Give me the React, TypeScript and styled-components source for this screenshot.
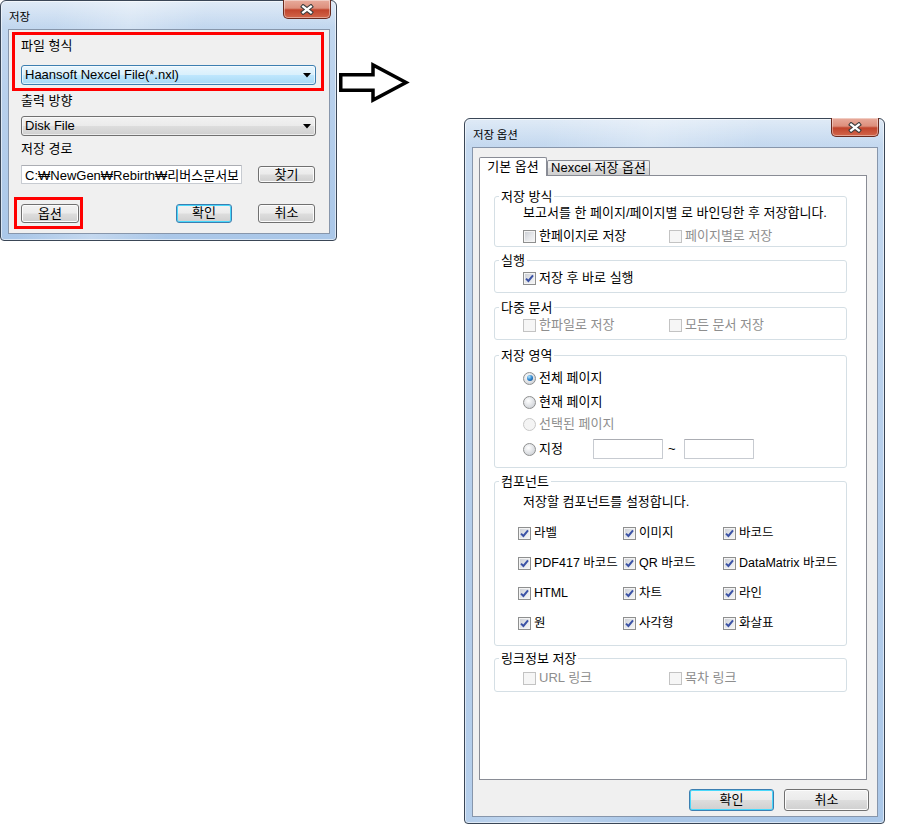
import React from 'react';
import styled, { createGlobalStyle } from 'styled-components';

const GlobalStyle = createGlobalStyle`
  html, body {
    margin: 0;
    padding: 0;
    background: #ffffff;
  }
  body {
    font-family: "Liberation Sans", "Noto Sans CJK KR", sans-serif;
    font-size: 13px;
    line-height: 16px;
    color: #000000;
  }
  * {
    box-sizing: border-box;
  }
`;

const hotGradient = 'linear-gradient(180deg, #eaf6fd 0%, #d9f0fc 48%, #bee6fd 52%, #a7d9f5 100%)';
const grayGradient = 'linear-gradient(180deg, #f2f2f2 0%, #ebebeb 48%, #dddddd 52%, #cfcfcf 100%)';

const Desktop = styled.div`
  display: flex;
  align-items: flex-start;
  width: 898px;
  height: 840px;
  overflow: hidden;
`;

const Window = styled.div<{ $width: number; $height: number; $top?: number; $left?: number }>`
  flex: none;
  display: flex;
  flex-direction: column;
  width: ${p => p.$width}px;
  height: ${p => p.$height}px;
  margin: ${p => p.$top ?? 0}px 0 0 ${p => p.$left ?? 0}px;
  padding: 0 6px 6px 7px;
  border: 1px solid #3a4656;
  border-radius: 6px 6px 4px 4px;
  background:
    linear-gradient(180deg, rgba(255, 255, 255, 0.45) 0px, rgba(255, 255, 255, 0) 26px),
    linear-gradient(100deg, rgba(255, 255, 255, 0) 15%, rgba(255, 255, 255, 0.3) 35%, rgba(255, 255, 255, 0) 55%),
    linear-gradient(180deg, #c6daf0 0%, #b8d0ec 40%, #aac7e8 100%);
  box-shadow: inset 0 0 0 1px rgba(255, 255, 255, 0.55);
`;

const TitleBar = styled.div`
  flex: none;
  height: 28px;
  display: flex;
  justify-content: space-between;
  align-items: flex-start;
`;

const Caption = styled.span`
  padding: 8px 0 0 1px;
  font-family: "Noto Sans CJK KR", sans-serif;
  font-size: 11.5px;
  line-height: 14px;
`;

const CloseButton = styled.div`
  width: 48px;
  height: 19px;
  margin: -1px -1px 0 0;
  display: flex;
  align-items: center;
  justify-content: center;
  border: 1px solid #6a2a1e;
  border-top: none;
  border-radius: 0 0 5px 5px;
  background: linear-gradient(180deg, #e8ab9c 0%, #dd8f7c 45%, #c1442c 55%, #d2664a 100%);
  box-shadow: inset 0 0 0 1px rgba(255, 255, 255, 0.4);
`;

const Client = styled.div`
  flex: 1;
  display: flex;
  flex-direction: column;
  border: 1px solid #8796ab;
  background: #f0f0f0;
`;

/* ---------- 저장 dialog ---------- */

const SaveBody = styled.div`
  display: flex;
  flex-direction: column;
  padding: 0 13px 0 12px;
`;

const Highlight = styled.div<{ $margin: string; $padding: string }>`
  border: 3px solid #ff0000;
  margin: ${p => p.$margin};
  padding: ${p => p.$padding};
`;

const FieldLabel = styled.div<{ $mt: number }>`
  margin-top: ${p => p.$mt}px;
  line-height: 16px;
`;

const Combo = styled.div<{ $hot?: boolean; $mt?: number }>`
  height: 20px;
  margin-top: ${p => p.$mt ?? 0}px;
  display: flex;
  align-items: center;
  justify-content: space-between;
  padding: 0 4px 0 3px;
  border: 1px solid ${p => (p.$hot ? '#3c7fb1' : '#707070')};
  border-radius: 3px;
  background: ${p => (p.$hot ? hotGradient : grayGradient)};
  box-shadow: inset 0 0 0 1px rgba(255, 255, 255, 0.6);
`;

const PathRow = styled.div`
  margin-top: 8px;
  display: flex;
  align-items: center;
  gap: 16px;
`;

const TextBox = styled.input<{ $w: number; $h: number }>`
  width: ${p => p.$w}px;
  height: ${p => p.$h}px;
  margin: 0;
  padding: 0 3px;
  font: inherit;
  color: #000;
  background: #ffffff;
  border: 1px solid #c7cbd1;
  border-top-color: #abadb3;
  border-radius: 1px;
  outline: none;
`;

const ButtonRow = styled.div<{ $mt: number; $justify?: string; $pr?: number }>`
  margin-top: ${p => p.$mt}px;
  padding-right: ${p => p.$pr ?? 0}px;
  display: flex;
  align-items: center;
  justify-content: ${p => p.$justify ?? 'flex-start'};
`;

const PushButton = styled.button<{ $w: number; $h: number; $default?: boolean; $ml?: number }>`
  width: ${p => p.$w}px;
  height: ${p => p.$h}px;
  margin: 0 0 0 ${p => p.$ml ?? 0}px;
  padding: 0;
  font: inherit;
  color: #000;
  border: 1px solid ${p => (p.$default ? '#3c7fb1' : '#707070')};
  border-radius: 3px;
  background: ${grayGradient};
  box-shadow: inset 0 0 0 1px ${p => (p.$default ? '#48d8fb' : '#fcfcfc')};
`;

const Arrow = styled.svg`
  flex: none;
  margin-top: 60px;
`;

/* ---------- 저장 옵션 dialog ---------- */

const OptionsBody = styled.div`
  display: flex;
  flex-direction: column;
  padding-top: 9px;
  flex: 1;
`;

const TabStrip = styled.div`
  height: 18px;
  margin-left: 6px;
  display: flex;
  align-items: flex-end;
`;

const Tab = styled.div<{ $active?: boolean; $w: number }>`
  position: relative;
  z-index: ${p => (p.$active ? 2 : 1)};
  width: ${p => p.$w}px;
  height: ${p => (p.$active ? 19 : 15)}px;
  margin-bottom: ${p => (p.$active ? -1 : 0)}px;
  padding-top: ${p => (p.$active ? 1 : 0)}px;
  line-height: ${p => (p.$active ? 16 : 14)}px;
  text-align: center;
  white-space: nowrap;
  border: 1px solid #898c95;
  border-bottom: none;
  border-radius: 2px 2px 0 0;
  background: ${p => (p.$active ? '#ffffff' : 'linear-gradient(180deg, #f2f2f2 0%, #ebebeb 48%, #dddddd 52%, #cfcfcf 100%)')};
`;

const TabPane = styled.div`
  width: 388px;
  height: 605px;
  margin-left: 6px;
  padding: 13px 19px 0 14px;
  border: 1px solid #898c95;
  background: #ffffff;
`;

const Group = styled.fieldset<{ $mt?: number; $pb: number }>`
  margin: ${p => p.$mt ?? 0}px 0 0 0;
  padding: 0 0 ${p => p.$pb}px 0;
  min-width: 0;
  border: 1px solid #d5dfe5;
  border-radius: 3px;
`;

const Legend = styled.legend`
  margin-left: 4px;
  padding: 0 2px;
  line-height: 15px;
`;

const Row = styled.div<{ $mt: number; $pl?: number; $h?: number }>`
  height: ${p => p.$h ?? 16}px;
  margin-top: ${p => p.$mt}px;
  padding-left: ${p => p.$pl ?? 28}px;
  display: flex;
  align-items: center;
  white-space: nowrap;
`;

const CheckGrid = styled.div`
  margin-top: 15px;
  padding-left: 23px;
  display: grid;
  grid-template-columns: 105px 100px auto;
  grid-auto-rows: 16px;
  row-gap: 14px;
  font-size: 12.5px;
`;

const Option = styled.label<{ $w?: number; $disabled?: boolean; $gap?: number }>`
  flex: none;
  display: inline-flex;
  align-items: center;
  gap: ${p => p.$gap ?? 3}px;
  width: ${p => (p.$w ? `${p.$w}px` : 'auto')};
  height: 16px;
  white-space: nowrap;
  color: ${p => (p.$disabled ? '#8e8e8e' : '#000000')};
`;

const Box = styled.span<{ $disabled?: boolean }>`
  flex: none;
  width: 13px;
  height: 13px;
  display: flex;
  align-items: center;
  justify-content: center;
  border: 1px solid ${p => (p.$disabled ? '#c3c3c3' : '#8e8f8f')};
  background: ${p =>
    p.$disabled ? '#f6f6f6' : 'linear-gradient(135deg, #c9ccd2 0%, #e6e8eb 55%, #f6f6f6 100%)'};
  box-shadow: inset 0 0 0 1px ${p => (p.$disabled ? '#f6f6f6' : '#f4f4f4')};
`;

const Radio = styled.span<{ $checked?: boolean; $disabled?: boolean }>`
  flex: none;
  width: 13px;
  height: 13px;
  display: flex;
  align-items: center;
  justify-content: center;
  border-radius: 50%;
  border: 1px solid ${p => (p.$disabled ? '#c8c8c8' : '#8e8f8f')};
  background: ${p =>
    p.$disabled ? '#f4f4f4' : 'radial-gradient(circle at 40% 35%, #ffffff 0%, #e4e6e9 45%, #c3c7cd 100%)'};

  &::after {
    content: '';
    display: ${p => (p.$checked ? 'block' : 'none')};
    width: 6px;
    height: 6px;
    border-radius: 50%;
    background: radial-gradient(circle at 35% 30%, #b5e6fc 0%, #2f86cf 50%, #0d3d7a 100%);
  }
`;

const Tilde = styled.span`
  width: 21px;
  padding-left: 5px;
`;

const CheckMark = () => (
  <svg width="9" height="9" viewBox="0 0 9 9">
    <path d="M1 4.6 L3.4 7 L8 1.4" fill="none" stroke="#3b52a5" strokeWidth="2" />
  </svg>
);

const CloseGlyph = () => (
  <svg width="14" height="11" viewBox="0 0 14 11">
    <path d="M3.2 2.6 L10.8 8.4 M10.8 2.6 L3.2 8.4" stroke="#3e3e3e" strokeWidth="4.4" strokeLinecap="square" />
    <path d="M3.2 2.6 L10.8 8.4 M10.8 2.6 L3.2 8.4" stroke="#ffffff" strokeWidth="2.3" strokeLinecap="square" />
  </svg>
);

const ComboArrow = () => (
  <svg width="8" height="5" viewBox="0 0 8 5">
    <polygon points="0,0 8,0 4,4.5" fill="#000" />
  </svg>
);

type CheckProps = { label: string; checked?: boolean; disabled?: boolean; width?: number };

const Check = ({ label, checked, disabled, width }: CheckProps) => (
  <Option $w={width} $disabled={disabled}>
    <Box $disabled={disabled}>{checked && <CheckMark />}</Box>
    {label}
  </Option>
);

type RadioProps = { label: string; checked?: boolean; disabled?: boolean; width?: number };

const RadioOption = ({ label, checked, disabled, width }: RadioProps) => (
  <Option $w={width} $disabled={disabled} $gap={3}>
    <Radio $checked={checked} $disabled={disabled} />
    {label}
  </Option>
);

const components = [
  '라벨', '이미지', '바코드',
  'PDF417 바코드', 'QR 바코드', 'DataMatrix 바코드',
  'HTML', '차트', '라인',
  '원', '사각형', '화살표',
];

export default function App() {
  return (
    <Desktop>
      <GlobalStyle />

      <Window $width={337} $height={241}>
        <TitleBar>
          <Caption>저장</Caption>
          <CloseButton><CloseGlyph /></CloseButton>
        </TitleBar>
        <Client>
          <SaveBody>
            <Highlight $margin="2px -8px 0 -9px" $padding="0 5px 3px 6px">
              <FieldLabel $mt={3}>파일 형식</FieldLabel>
              <Combo $hot $mt={11}>
                <span>Haansoft Nexcel File(*.nxl)</span>
                <ComboArrow />
              </Combo>
            </Highlight>
            <FieldLabel $mt={2}>출력 방향</FieldLabel>
            <Combo $mt={7}>
              <span>Disk File</span>
              <ComboArrow />
            </Combo>
            <FieldLabel $mt={5}>저장 경로</FieldLabel>
            <PathRow>
              <TextBox $w={221} $h={19} readOnly value="C:₩NewGen₩Rebirth₩리버스문서보관함" />
              <PushButton $w={57} $h={17}>찾기</PushButton>
            </PathRow>
            <ButtonRow $mt={13}>
              <Highlight $margin="0 0 0 -7px" $padding="4px 1px 3px 4px">
                <PushButton $w={58} $h={19}>옵션</PushButton>
              </Highlight>
              <PushButton $w={56} $h={19} $default $ml={93}>확인</PushButton>
              <PushButton $w={57} $h={19} $ml={26}>취소</PushButton>
            </ButtonRow>
          </SaveBody>
        </Client>
      </Window>

      <Arrow width="75" height="45" viewBox="0 0 75 45">
        <polygon
          points="3.75,14.75 36,14.75 36,5 69,22.5 36,40 36,30.25 3.75,30.25"
          fill="#ffffff"
          stroke="#000000"
          strokeWidth="3.5"
          strokeLinejoin="miter"
        />
      </Arrow>

      <Window $width={421} $height={706} $top={118} $left={52}>
        <TitleBar>
          <Caption>저장 옵션</Caption>
          <CloseButton><CloseGlyph /></CloseButton>
        </TitleBar>
        <Client>
          <OptionsBody>
            <TabStrip>
              <Tab $active $w={68}>기본 옵션</Tab>
              <Tab $w={103}>Nexcel 저장 옵션</Tab>
            </TabStrip>
            <TabPane>
              <Group $pb={2}>
                <Legend>저장 방식</Legend>
                <Row $mt={1}>보고서를 한 페이지/페이지별 로 바인딩한 후 저장합니다.</Row>
                <Row $mt={7}>
                  <Check label="한페이지로 저장" width={146} />
                  <Check label="페이지별로 저장" disabled />
                </Row>
              </Group>

              <Group $mt={6} $pb={6}>
                <Legend>실행</Legend>
                <Row $mt={2}>
                  <Check label="저장 후 바로 실행" checked />
                </Row>
              </Group>

              <Group $mt={7} $pb={6}>
                <Legend>다중 문서</Legend>
                <Row $mt={2}>
                  <Check label="한파일로 저장" disabled width={146} />
                  <Check label="모든 문서 저장" disabled />
                </Row>
              </Group>

              <Group $mt={8} $pb={8}>
                <Legend>저장 영역</Legend>
                <Row $mt={7}><RadioOption label="전체 페이지" checked /></Row>
                <Row $mt={8}><RadioOption label="현재 페이지" /></Row>
                <Row $mt={6}><RadioOption label="선택된 페이지" disabled /></Row>
                <Row $mt={7} $h={20}>
                  <RadioOption label="지정" width={70} />
                  <TextBox $w={70} $h={20} readOnly value="" />
                  <Tilde>~</Tilde>
                  <TextBox $w={70} $h={20} readOnly value="" />
                </Row>
              </Group>

              <Group $mt={6} $pb={14}>
                <Legend>컴포넌트</Legend>
                <Row $mt={5}>저장할 컴포넌트를 설정합니다.</Row>
                <CheckGrid>
                  {components.map(name => (
                    <Check key={name} label={name} checked />
                  ))}
                </CheckGrid>
              </Group>

              <Group $mt={5} $pb={5}>
                <Legend>링크정보 저장</Legend>
                <Row $mt={4}>
                  <Check label="URL 링크" disabled width={146} />
                  <Check label="목차 링크" disabled />
                </Row>
              </Group>
            </TabPane>
            <ButtonRow $mt={9} $justify="flex-end" $pr={8}>
              <PushButton $w={85} $h={22} $default>확인</PushButton>
              <PushButton $w={85} $h={22} $ml={10}>취소</PushButton>
            </ButtonRow>
          </OptionsBody>
        </Client>
      </Window>
    </Desktop>
  );
}
